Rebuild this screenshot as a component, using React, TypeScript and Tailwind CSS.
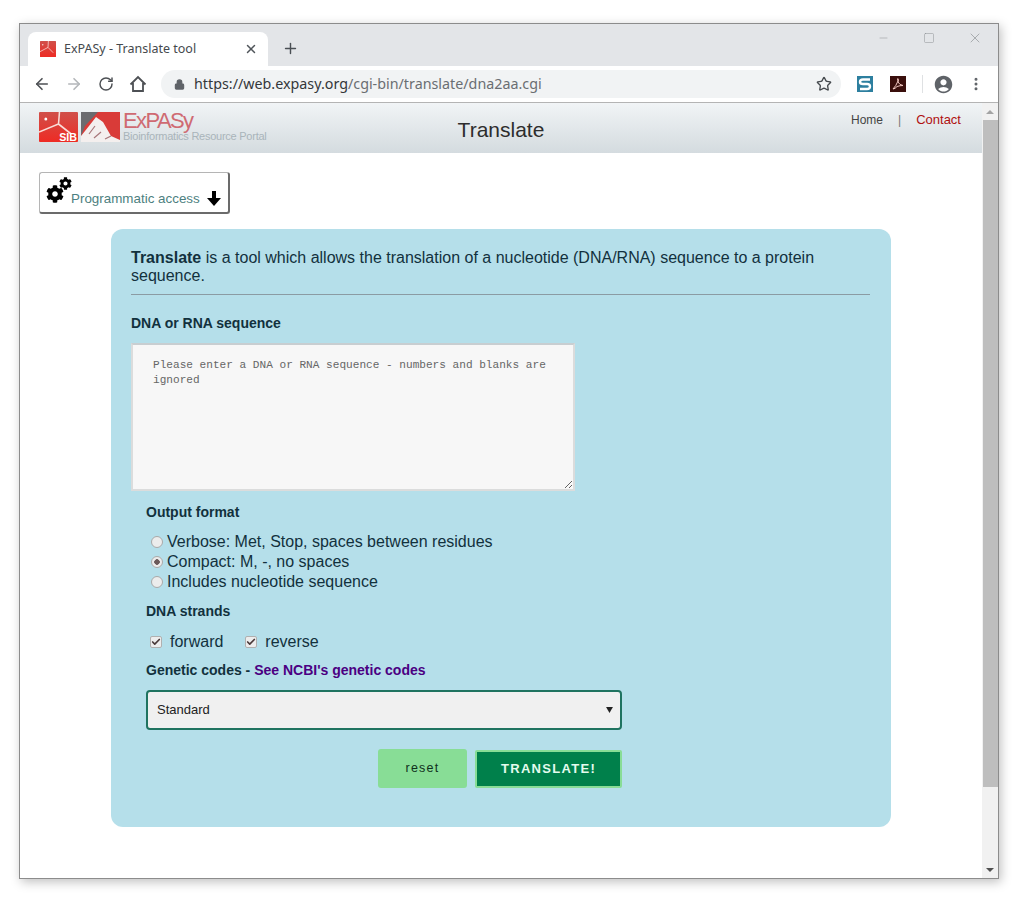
import { ArrowLeft, ArrowRight, Check, Lock, Minus, MoreVertical, Plus, RotateCw, Square, Star, X } from "lucide-react";
import { FaCog } from "react-icons/fa";
import { MdAccountCircle } from "react-icons/md";

const formats = [
  { label: "Verbose: Met, Stop, spaces between residues", checked: false },
  { label: "Compact: M, -, no spaces", checked: true },
  { label: "Includes nucleotide sequence", checked: false },
];

function SibLogo({ small }: { small?: boolean }) {
  return (
    <svg viewBox="0 0 40 30" className={small ? "h-[16px] w-[16px]" : "h-[30px] w-[39px] shrink-0"} preserveAspectRatio="none" aria-hidden="true">
      <defs>
        <linearGradient id={small ? "sibs" : "sibl"} x1="0" y1="0" x2="0" y2="1">
          <stop offset="0" stopColor="#d0504a" />
          <stop offset="1" stopColor="#ee2b24" />
        </linearGradient>
      </defs>
      <rect width="40" height="30" rx="1" fill={`url(#${small ? "sibs" : "sibl"})`} />
      <path d="M21 0 L20 12 L0 20 M20 12 L33 22" stroke="#f9ddd8" strokeWidth="1.6" fill="none" />
      <circle cx="7" cy="7" r="1.5" fill="#fff" />
      {!small && (
        <text x="39" y="29" textAnchor="end" fontFamily="Liberation Sans" fontWeight="700" fontSize="11" fill="#fff">
          SIB
        </text>
      )}
    </svg>
  );
}

function BrowserChrome() {
  return (
    <>
      <div className="flex h-[42px] items-end bg-[#e3e5e8] pl-[8px]">
        <div className="flex h-[34px] w-[240px] items-center rounded-t-[8px] bg-white pl-[12px] pr-[10px]">
          <SibLogo small />
          <span className="ml-[8px] flex-1 pt-px font-['Noto_Sans'] text-[12.5px] text-[#45494d]">ExPASy - Translate tool</span>
          <X className="h-[14px] w-[14px] text-[#50555a]" strokeWidth={2.5} />
        </div>
        <Plus className="mb-[9px] ml-[14px] h-[17px] w-[17px] text-[#4a4f54]" strokeWidth={2} />
        <div className="mb-[20px] ml-auto flex items-center gap-[32px] pr-[15px] text-[#8b8f93]">
          <Minus className="h-[12px] w-[15px]" strokeWidth={1} />
          <Square className="h-[12px] w-[12px]" strokeWidth={1} />
          <X className="h-[16px] w-[16px]" strokeWidth={1} />
        </div>
      </div>
      <div className="flex h-[37px] items-center border-b border-[#b4b4b4] bg-white pl-[13px] text-[#4d5054]">
        <ArrowLeft className="h-[18px] w-[18px]" strokeWidth={2.2} />
        <ArrowRight className="ml-[14px] h-[18px] w-[18px] text-[#b4b7ba]" strokeWidth={2.2} />
        <RotateCw className="ml-[15px] h-[16px] w-[16px]" strokeWidth={2.2} />
        <svg viewBox="0 0 18 18" className="ml-[15px] h-[18px] w-[18px]" fill="none" stroke="currentColor" strokeWidth="1.8" aria-hidden="true">
          <path d="M1.5 9.5 L9 2 L16.5 9.5 M4 8 V16 H14 V8" />
        </svg>
        <div className="ml-[14px] flex h-[28px] w-[680px] items-center rounded-full bg-[#f1f3f4] pl-[13px] pr-[9px]">
          <Lock className="h-[11px] w-[11px] fill-[#5f6368] text-[#5f6368]" strokeWidth={2.5} />
          <span className="ml-[9px] flex-1 font-['Noto_Sans'] text-[14.3px] text-[#6a6e72]">
            <span className="text-[#34373a]">https://web.expasy.org</span>/cgi-bin/translate/dna2aa.cgi
          </span>
          <Star className="h-[16px] w-[16px] text-[#45494d]" strokeWidth={2} />
        </div>
        <svg viewBox="0 0 16 16" className="ml-[16px] h-[16px] w-[16px]" aria-hidden="true">
          <rect width="16" height="16" fill="#2d7f9f" />
          <path d="M13 3.5 H6 Q3 3.5 3 6 Q3 8 6 8 H10 Q13 8 13 10.5 Q13 13 10 13 H3" stroke="#fff" strokeWidth="2.4" fill="none" />
        </svg>
        <svg viewBox="0 0 16 16" className="ml-[17px] h-[16px] w-[16px]" aria-hidden="true">
          <rect width="16" height="16" fill="#3a0f0c" />
          <path d="M3 13 Q6 10 8 5 Q7 2 8 2.5 Q9 3 8 6 Q9.5 9 13 9.5 Q10 9.5 7 10.5 Q5 13 3 13Z" stroke="#f3c9c2" strokeWidth="1" fill="none" />
        </svg>
        <div className="ml-[16px] h-[18px] w-px bg-[#dfe1e3]" />
        <MdAccountCircle className="ml-[10px] h-[21px] w-[21px] text-[#5f6368]" />
        <MoreVertical className="ml-[14px] h-[16px] w-[16px] text-[#5f6368]" strokeWidth={2.5} />
      </div>
    </>
  );
}

function SiteHeader() {
  return (
    <div className="grid h-[50px] grid-cols-3 bg-gradient-to-b from-[#f1f4f6] to-[#d4dbdf]">
      <div className="flex items-start pl-[19px] pt-[9px]">
        <SibLogo />
        <svg viewBox="0 0 39 30" className="ml-[3px] h-[30px] w-[39px] shrink-0" aria-hidden="true">
          <rect width="39" height="30" fill="#d93b38" />
          <polygon points="0,0 17,0 4,14 0,24" fill="#6b6b6f" />
          <polygon points="0,30 0,24 8,14 15,5 22,10 30,24 39,28 39,30" fill="#f4efee" />
          <path d="M8 22 L14 14 M13 26 L20 20 M24 27 L30 24" stroke="#a8777a" strokeWidth="1.2" />
        </svg>
        <div className="ml-[3px] flex shrink-0 flex-col">
          <div className="font-['Liberation_Sans'] text-[22px] leading-[18px] tracking-[-1.6px] text-[#cf6a72]">ExPASy</div>
          <div className="whitespace-nowrap font-['Liberation_Sans'] text-[11px] leading-[12px] tracking-[-0.25px] text-[#a9b4ba]">
            Bioinformatics Resource Portal
          </div>
        </div>
      </div>
      <div className="pt-[15px] text-center font-['Liberation_Sans'] text-[21px] leading-[24px] text-[#2d2d2d]">Translate</div>
      <div className="flex items-start justify-end gap-[15px] pr-[21px] pt-[9px] font-['Liberation_Sans'] text-[12px] leading-[16px]">
        <span className="text-[#444]">Home</span>
        <span className="text-[#777]">|</span>
        <span className="text-[13px] text-[#b01010]">Contact</span>
      </div>
    </div>
  );
}

function FormPanel() {
  return (
    <div className="mx-auto mt-[15px] h-[598px] w-[780px] rounded-[12px] bg-[#b5dfea] px-[20px] pt-[20px] font-['Liberation_Sans'] text-[#12313d]">
      <p className="text-[16px] leading-[18px]">
        <b>Translate</b> is a tool which allows the translation of a nucleotide (DNA/RNA) sequence to a protein sequence.
      </p>
      <div className="mt-[9px] h-px w-[739px] bg-[#8b9ba3]" />
      <div className="mt-[20px] text-[14px] font-bold leading-[16px]">DNA or RNA sequence</div>
      <textarea
        className="mt-[12px] block h-[148px] w-[444px] border-2 border-[#dbdcdc] border-t-[#c8ced1] bg-[#f7f7f7] px-[20px] pb-[12px] pt-[13px] font-['Liberation_Mono'] text-[11.1px] leading-[15px] placeholder:text-[#666]"
        placeholder="Please enter a DNA or RNA sequence - numbers and blanks are ignored"
      />
      <div className="pl-[15px]">
        <div className="mt-[13px] text-[14px] font-bold leading-[16px]">Output format</div>
        <div className="mt-[12px]">
          {formats.map((f) => (
            <label key={f.label} className="flex h-[20px] items-center text-[16px]">
              <input
                type="radio"
                name="format"
                defaultChecked={f.checked}
                className="ml-[5px] mr-[4px] h-[12px] w-[12px] appearance-none rounded-full border border-[#a9a9a9] bg-[#ececec] checked:bg-[radial-gradient(circle,#6b5a5a_0,#6b5a5a_2.5px,#ececec_3px)]"
              />
              {f.label}
            </label>
          ))}
        </div>
        <div className="mt-[11px] text-[14px] font-bold leading-[16px]">DNA strands</div>
        <div className="mt-[13px] flex h-[20px] items-center text-[16px]">
          {["forward", "reverse"].map((s) => (
            <label key={s} className="mr-[18px] flex items-center">
              <span className="relative ml-[4px] mr-[8px] h-[12px] w-[12px] rounded-[2px] border border-[#b0b0b0] bg-[#ededed]">
                <Check className="absolute left-0 top-0 h-[10px] w-[10px] text-[#4a3a3a]" strokeWidth={4} />
              </span>
              {s}
            </label>
          ))}
        </div>
        <div className="mt-[10px] text-[14px] font-bold leading-[16px]">
          Genetic codes - <span className="text-[#4b0082]">See NCBI's genetic codes</span>
        </div>
        <div className="relative mt-[12px] w-[476px]">
          <select className="block h-[40px] w-full appearance-none rounded-[4px] border-2 border-[#1f7360] bg-[#f0f0f0] pl-[9px] text-[13px] text-[#222]">
            <option>Standard</option>
          </select>
          <svg viewBox="0 0 8 7" className="absolute right-[9px] top-[17px] h-[6px] w-[7px]" aria-hidden="true">
            <polygon points="0,0 8,0 4,7" fill="#222" />
          </svg>
        </div>
        <div className="mt-[19px] flex w-[476px] items-start justify-end gap-[8px]">
          <button className="h-[39px] w-[89px] rounded-[3px] bg-[#88dd96] text-[12.5px] tracking-[1.2px] text-[#10301c]">reset</button>
          <button className="mt-px h-[38px] w-[147px] rounded-[2px] border-2 border-[#88dd96] bg-[#00804b] text-[13px] font-bold tracking-[1.3px] text-[#e4fbee]">
            TRANSLATE!
          </button>
        </div>
      </div>
    </div>
  );
}

function Scrollbar() {
  return (
    <div className="flex w-[16px] shrink-0 flex-col bg-[#f1f1f1]">
      <div className="flex h-[17px] items-center justify-center">
        <svg viewBox="0 0 8 4" className="h-[4px] w-[8px]" aria-hidden="true">
          <polygon points="4,0 8,4 0,4" fill="#a3a3a3" />
        </svg>
      </div>
      <div className="ml-px h-[667px] bg-[#bebebe]" />
      <div className="flex flex-1 items-end justify-center pb-[6px]">
        <svg viewBox="0 0 8 4" className="h-[4px] w-[8px]" aria-hidden="true">
          <polygon points="0,0 8,0 4,4" fill="#505050" />
        </svg>
      </div>
    </div>
  );
}

export default function App() {
  return (
    <div className="h-[900px] w-[1018px] overflow-hidden bg-white pl-[19px] pt-[23px]">
      <div className="flex h-[856px] w-[980px] flex-col border border-[#8c8c8c] shadow-[2px_3px_10px_rgba(0,0,0,0.25)]">
        <BrowserChrome />
        <div className="flex min-h-0 flex-1 bg-white">
          <div className="min-w-0 flex-1">
            <SiteHeader />
            <div className="ml-[19px] mt-[19px] flex h-[42px] w-[191px] items-end rounded-[3px] border border-[#b5b5b5] border-b-2 border-r-2 border-b-[#6b6b6b] border-r-[#6b6b6b] bg-white pb-[5px] pl-[6px]">
              <span className="flex w-[25px] shrink-0 self-start pt-[4px]">
                <FaCog className="mt-[8px] h-[18px] w-[18px] shrink-0 text-black" />
                <FaCog className="-ml-[5px] h-[13px] w-[13px] shrink-0 text-black" />
              </span>
              <span className="font-['Liberation_Sans'] text-[13.4px] leading-[16px] text-[#4d7f80]">Programmatic access</span>
              <svg viewBox="0 0 14 15" className="mb-[1px] ml-[7px] h-[15px] w-[14px]" aria-hidden="true">
                <polygon points="5,0 9,0 9,7 14,7 7,15 0,7 5,7" fill="#000" />
              </svg>
            </div>
            <FormPanel />
          </div>
          <Scrollbar />
        </div>
      </div>
    </div>
  );
}
